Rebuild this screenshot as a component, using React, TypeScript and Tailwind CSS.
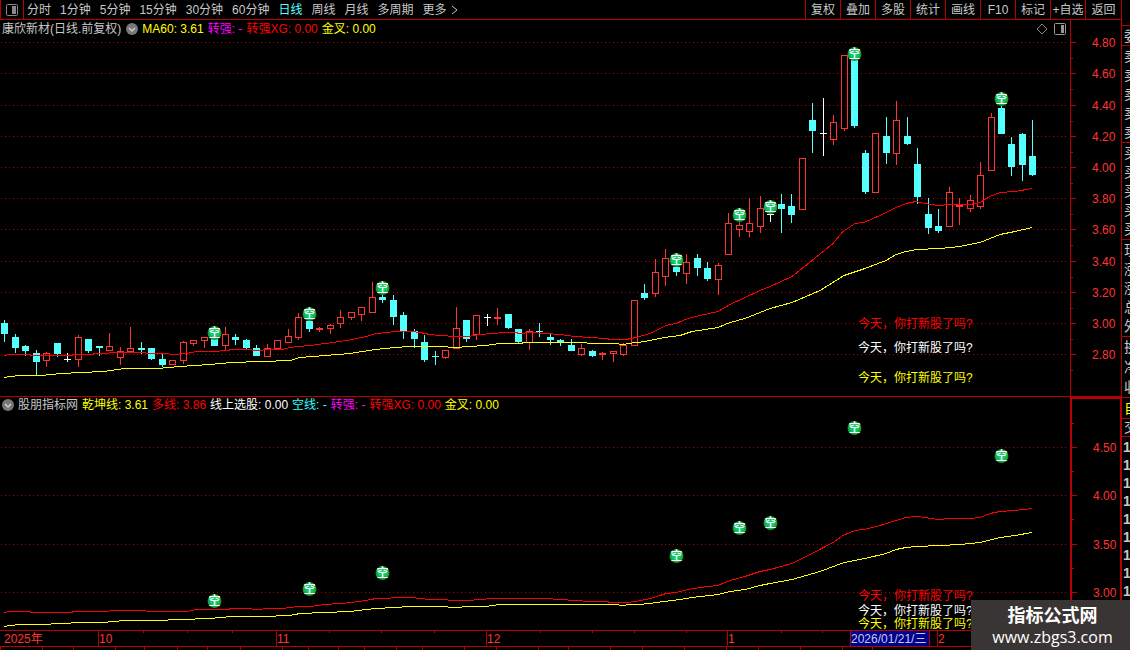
import { useState } from 'react'

type Kind = 'up' | 'down' | 'flat'
// center x, high, low, body top, body bottom, kind
type Candle = [number, number, number, number, number, Kind]

const FONT = "font-['Liberation_Sans','Noto_Sans_CJK_SC',sans-serif]"

const candles: Candle[] = [
  [4, 320, 342, 323, 334, 'down'], [15, 334, 353, 337, 348, 'down'], [25, 345, 356, 346, 351, 'down'],
  [36, 350, 375, 353, 362, 'down'], [46, 352, 367, 353, 361, 'up'], [57, 343, 357, 343, 354, 'down'],
  [67, 353, 362, 359, 360, 'flat'], [78, 335, 367, 337, 360, 'up'], [88, 339, 353, 339, 351, 'down'],
  [99, 346, 356, 346, 348, 'down'], [109, 333, 351, 346, 351, 'up'], [120, 347, 365, 351, 358, 'up'],
  [130, 327, 352, 348, 352, 'up'], [141, 342, 354, 348, 350, 'down'], [151, 348, 360, 348, 359, 'down'],
  [162, 353, 367, 359, 365, 'down'], [172, 360, 365, 360, 365, 'up'], [183, 341, 364, 342, 361, 'up'],
  [193, 340, 346, 340, 344, 'up'], [204, 337, 348, 337, 341, 'up'], [214, 339, 346, 339, 346, 'down'],
  [225, 327, 350, 334, 346, 'up'], [235, 334, 345, 337, 340, 'down'], [246, 339, 349, 340, 348, 'down'],
  [256, 345, 356, 348, 356, 'down'], [267, 344, 357, 348, 357, 'up'], [277, 340, 349, 340, 349, 'up'],
  [288, 329, 343, 336, 343, 'up'], [298, 313, 340, 317, 338, 'up'], [309, 321, 332, 321, 329, 'down'],
  [319, 327, 332, 328, 330, 'up'], [330, 324, 334, 325, 329, 'up'], [340, 310, 328, 317, 324, 'up'],
  [351, 312, 320, 312, 318, 'up'], [361, 307, 321, 307, 315, 'up'], [372, 282, 313, 297, 313, 'up'],
  [382, 295, 303, 297, 300, 'down'], [393, 295, 325, 300, 317, 'down'], [403, 312, 339, 315, 332, 'down'],
  [414, 329, 348, 331, 339, 'down'], [424, 335, 362, 342, 360, 'down'], [435, 351, 365, 356, 357, 'down'],
  [445, 350, 359, 350, 358, 'up'], [456, 307, 349, 328, 349, 'up'], [466, 320, 342, 320, 339, 'down'],
  [476, 315, 340, 315, 335, 'up'], [487, 314, 326, 317, 318, 'flat'], [497, 308, 325, 317, 319, 'up'],
  [508, 314, 329, 314, 328, 'down'], [518, 329, 343, 329, 342, 'down'], [529, 329, 350, 331, 343, 'up'],
  [539, 323, 337, 331, 332, 'down'], [550, 334, 345, 337, 340, 'down'], [560, 339, 346, 340, 343, 'down'],
  [571, 339, 351, 345, 351, 'down'], [581, 344, 356, 348, 355, 'up'], [592, 350, 357, 351, 356, 'down'],
  [602, 352, 360, 353, 355, 'up'], [613, 351, 362, 351, 354, 'up'], [623, 343, 356, 345, 355, 'up'],
  [634, 300, 346, 300, 346, 'up'], [644, 284, 300, 293, 298, 'down'], [655, 259, 297, 272, 294, 'up'],
  [665, 249, 286, 258, 277, 'up'], [676, 266, 276, 267, 272, 'down'], [686, 254, 284, 262, 274, 'up'],
  [697, 254, 276, 258, 268, 'down'], [707, 262, 281, 268, 279, 'down'], [718, 263, 295, 265, 280, 'up'],
  [728, 213, 255, 223, 255, 'up'], [739, 221, 237, 225, 230, 'up'], [749, 198, 237, 223, 232, 'up'],
  [760, 196, 233, 208, 227, 'up'], [770, 212, 222, 214, 215, 'flat'], [781, 194, 233, 204, 209, 'down'],
  [791, 194, 223, 206, 215, 'down'], [802, 158, 210, 158, 210, 'up'], [812, 103, 153, 120, 131, 'down'],
  [823, 98, 156, 133, 134, 'flat'], [833, 115, 145, 122, 140, 'up'], [844, 55, 131, 55, 129, 'up'],
  [854, 60, 128, 60, 126, 'down'], [865, 150, 194, 153, 192, 'down'], [875, 133, 193, 133, 193, 'up'],
  [886, 117, 164, 136, 153, 'down'], [896, 101, 165, 120, 154, 'up'], [907, 117, 145, 136, 144, 'down'],
  [917, 148, 204, 164, 197, 'down'], [928, 198, 234, 214, 228, 'down'], [938, 209, 233, 226, 231, 'down'],
  [949, 187, 227, 192, 227, 'up'], [959, 198, 225, 205, 207, 'up'], [970, 195, 212, 200, 209, 'up'],
  [980, 162, 209, 175, 207, 'up'], [991, 113, 171, 117, 171, 'up'], [1001, 106, 134, 108, 134, 'down'],
  [1011, 137, 176, 144, 167, 'down'], [1022, 133, 181, 134, 165, 'down'], [1032, 120, 176, 156, 175, 'down'],
]

const fastLine: [number, number][] = [
  [4, 355], [10, 354], [30, 354], [31, 355], [72, 355], [73, 354], [93, 354], [94, 353], [124, 352], [145, 352],
  [147, 353], [168, 353], [170, 354], [178, 354], [180, 353], [188, 353], [190, 352], [199, 351], [219, 351],
  [221, 350], [229, 350], [230, 349], [251, 349], [253, 350], [262, 350], [264, 349], [282, 349], [290, 347],
  [298, 346], [310, 345], [325, 343], [340, 341], [352, 339], [366, 336], [376, 333], [388, 332], [395, 331],
  [412, 331], [420, 332], [430, 334], [440, 335], [455, 336], [468, 336], [480, 334], [492, 333], [505, 332],
  [515, 332], [520, 333], [530, 332], [545, 333], [560, 334], [575, 336], [590, 337], [605, 338], [612, 339],
  [626, 339], [636, 337], [650, 333], [660, 328], [666, 325], [676, 323], [688, 318], [700, 315], [718, 311],
  [730, 304], [745, 297], [760, 290], [770, 286], [792, 276], [812, 260], [833, 243], [843, 231], [855, 223],
  [864, 222], [880, 215], [896, 207], [906, 203], [916, 201], [925, 203], [938, 205], [950, 204], [970, 204],
  [980, 202], [990, 196], [1000, 192], [1015, 191], [1032, 188],
]

const slowLine: [number, number][] = [
  [4, 377], [10, 376], [20, 375], [41, 375], [61, 373], [82, 372], [103, 371], [125, 368], [157, 368], [180, 366],
  [210, 364], [231, 362], [262, 361], [290, 360], [300, 357], [325, 355], [350, 353], [375, 349], [395, 347],
  [410, 346], [440, 346], [455, 347], [470, 346], [485, 345], [500, 343], [522, 343], [523, 342], [586, 342],
  [588, 343], [618, 343], [620, 344], [625, 344], [627, 343], [638, 342], [650, 340], [664, 337], [680, 335],
  [692, 331], [718, 327], [730, 322], [745, 318], [760, 312], [770, 308], [792, 302], [820, 290], [844, 275],
  [865, 268], [886, 260], [896, 254], [906, 251], [917, 249], [940, 248], [960, 246], [980, 242], [1000, 234],
  [1015, 231], [1032, 227],
]

const mainMarks = [[214, 333], [309, 314], [382, 288], [676, 260], [739, 215], [770, 207], [854, 54], [1001, 99]]
const subMarks = [[214, 601], [309, 589], [382, 573], [676, 556], [739, 528], [770, 523], [854, 428], [1001, 456]]

const mainScale: [string, number][] = [
  ['4.80', 42], ['4.60', 73], ['4.40', 105], ['4.20', 136], ['4.00', 167], ['3.80', 198],
  ['3.60', 229], ['3.40', 261], ['3.20', 292], ['3.00', 323], ['2.80', 354],
]
const subScale: [string, number][] = [['4.50', 447], ['4.00', 495], ['3.50', 544], ['3.00', 592]]

const periods = ['分时', '1分钟', '5分钟', '15分钟', '30分钟', '60分钟', '日线', '周线', '月线', '多周期', '更多']
const tools = ['复权', '叠加', '多股', '统计', '画线', 'F10', '标记', '+自选', '返回']

const mainLegend = [
  { text: 'MA60: 3.61', color: 'text-[#ffff00]' },
  { text: '转强: -', color: 'text-[#ff00ff]' },
  { text: '转强XG: 0.00', color: 'text-[#ff0000]' },
  { text: '金叉: 0.00', color: 'text-[#ffff00]' },
]
const subLegend = [
  { text: '乾坤线: 3.61', color: 'text-[#ffff00]' },
  { text: '多线: 3.86', color: 'text-[#ff0000]' },
  { text: '线上选股: 0.00', color: 'text-white' },
  { text: '空线: -', color: 'text-[#33ffff]' },
  { text: '转强: -', color: 'text-[#ff00ff]' },
  { text: '转强XG: 0.00', color: 'text-[#ff0000]' },
  { text: '金叉: 0.00', color: 'text-[#ffff00]' },
]

const notice = '今天，你打新股了吗?'

const quoteGroups = [
  { rows: ['委'], line: 'h-5' },
  { rows: ['卖', '卖', '卖', '卖', '卖'], line: 'h-[97px]' },
  { rows: ['买', '买', '买', '买', '买'], line: 'h-[97px]' },
  { rows: ['现', '涨', '涨', '总', '外'], line: 'h-[97px]' },
  { rows: ['换', '净', '收'], line: 'h-[61px]' },
]

const bottomTabs = [42, 31, 42, 29, 33, 30, 33, 42, 26, 30, 26, 32, 26, 42, 32, 42, 30, 42, 32, 42, 42, 32, 42, 42, 30, 42]

function Candlestick({ data }: { data: Candle }) {
  const [x, high, low, top, bottom, kind] = data
  if (kind === 'up') {
    return (
      <g fill="#ff3333">
        <rect x={x} y={high} width={1} height={top - high} />
        <rect x={x} y={bottom} width={1} height={low - bottom} />
        <path fillRule="evenodd" d={`M${x - 3} ${top}h7v${bottom - top}h-7z M${x - 2} ${top + 1}v${Math.max(bottom - top - 2, 0)}h5v${-Math.max(bottom - top - 2, 0)}z`} />
      </g>
    )
  }
  return (
    <g fill={kind === 'flat' ? '#ffffff' : '#54ffff'}>
      <rect x={x} y={high} width={1} height={low - high} />
      <rect x={x - 3} y={top} width={7} height={bottom - top} />
    </g>
  )
}

function Mark({ x, y }: { x: number; y: number }) {
  return (
    <g>
      <circle cx={x + 0.5} cy={y} r={7} fill="url(#mark)" />
      <text x={x + 0.5} y={y + 4} textAnchor="middle" fill="#fff" fontSize={12} fontWeight={500}>空</text>
    </g>
  )
}

function MarkFill() {
  return (
    <defs>
      <radialGradient id="mark">
        <stop offset="0" stopColor="#14d88a" />
        <stop offset="0.65" stopColor="#10c060" />
        <stop offset="1" stopColor="#1a8a14" />
      </radialGradient>
    </defs>
  )
}

function GridLines({ scale }: { scale: [string, number][] }) {
  return (
    <>
      {scale.map(([label, y]) => (
        <line key={label} x1={1} x2={1068} y1={y + 0.5} y2={y + 0.5} stroke="#b00000" strokeDasharray="1 3" shapeRendering="crispEdges" />
      ))}
    </>
  )
}

function Line({ points, color, map }: { points: [number, number][]; color: string; map?: (y: number) => number }) {
  const list = points.map(([x, y]) => `${x},${(map ? map(y) : y) + 0.5}`).join(' ')
  return <polyline points={list} fill="none" stroke={color} strokeWidth={1} shapeRendering="crispEdges" />
}

function PriceAxis({ scale, offset, minor, start }: { scale: [string, number][]; offset: number; minor: number; start: number }) {
  return (
    <svg className="block h-full w-full" aria-label="价格坐标">
      <g transform={`translate(0 ${-offset})`}>
        {scale.map(([label, y]) => (
          <g key={label}>
            <rect x={0} y={y} width={5} height={1} fill="#c00000" />
            <rect x={0} y={y + minor} width={2} height={1} fill="#c00000" />
            <text x={21} y={y + 5} fontSize={12} fill="#ff3333">{label}</text>
          </g>
        ))}
        <rect x={0} y={start} width={2} height={1} fill="#c00000" />
      </g>
    </svg>
  )
}

function Toggle({ label }: { label: string }) {
  return (
    <button aria-label={label} className="shrink-0">
      <svg width="12" height="12" viewBox="0 0 12 12" className="block">
        <circle cx="6" cy="6" r="6" fill="#777" />
        <path d="M3 5l3 3 3-3" fill="none" stroke="#ccc" strokeWidth="1.5" />
      </svg>
    </button>
  )
}

function Legend({ items }: { items: { text: string; color: string }[] }) {
  return (
    <>
      {items.map((item) => (
        <span key={item.text} className={item.color}>{item.text}</span>
      ))}
    </>
  )
}

function Toolbar({ active, onChange }: { active: string; onChange: (p: string) => void }) {
  return (
    <header className="flex h-5 shrink-0 border-b border-[#b80000] text-[#c8c8c8]">
      <button aria-label="侧栏" className="flex w-6 shrink-0 items-center justify-center border-x border-[#b80000]">
        <svg width="12" height="12" viewBox="0 0 12 12">
          <rect x="0.5" y="0.5" width="11" height="11" rx="1" fill="none" stroke="#888" />
          <rect x="6" y="2" width="4" height="8" fill="#888" />
        </svg>
      </button>
      <nav className="ml-[3px] flex items-center gap-[9px]">
        {periods.map((p) => (
          <button key={p} onClick={() => onChange(p)} className={p === active ? 'text-[#54ffff]' : ''}>
            {p}
          </button>
        ))}
      </nav>
      <svg width="8" height="12" viewBox="0 0 8 12" className="ml-1 self-center">
        <path d="M1 2l5 4-5 4" fill="none" stroke="#c8c8c8" />
      </svg>
      <div className="ml-auto flex">
        {tools.map((t) => (
          <button key={t} className="w-[35px] border-l border-[#b80000] text-center last:w-9">
            {t}
          </button>
        ))}
      </div>
    </header>
  )
}

function QuoteStrip() {
  return (
    <aside className="flex w-[9px] shrink-0 flex-col overflow-hidden border-l border-[#b80000] pt-[25px] text-[14px] text-[#c8c8c8]">
      {quoteGroups.map((g, i) => (
        <div key={i} className={`flex shrink-0 flex-col justify-around border-t border-[#b80000] pl-0.5 leading-4 ${g.line}`}>
          {g.rows.map((r, j) => <span key={j} className="w-4">{r}</span>)}
        </div>
      ))}
      <div className="h-[21px] shrink-0 border-t border-[#b80000] pl-0.5 leading-5 text-[#ffff00]"><span className="block w-4">自</span></div>
      <div className="h-[19px] shrink-0 border-y border-[#b80000] pl-0.5 leading-4"><span className="block w-4">交</span></div>
      <div className="flex flex-col pt-px pl-px font-bold leading-[18px]">
        {Array.from({ length: 9 }, (_, i) => <span key={i}>1</span>)}
      </div>
    </aside>
  )
}

export default function App() {
  const [period, setPeriod] = useState('日线')
  const toSub = (y: number) => Math.round(592 + (y - 323) * 0.622)

  return (
    <div className={`relative flex h-screen overflow-hidden bg-black text-xs whitespace-nowrap ${FONT}`}>
      <main className="flex min-w-0 flex-1 flex-col">
        <Toolbar active={period} onChange={setPeriod} />

        {/* 主图 */}
        <section className="flex h-[377px] shrink-0 border-b border-[#b80000]">
          <div className="relative min-w-0 flex-1">
            <svg className="block h-full w-full" aria-label="K线图">
              <MarkFill />
              <g transform="translate(0 -20)">
                <GridLines scale={mainScale} />
                <g shapeRendering="crispEdges">
                  {candles.map((c) => <Candlestick key={c[0]} data={c} />)}
                </g>
                <Line points={fastLine} color="#ff0000" />
                <Line points={slowLine} color="#ffff00" />
                {mainMarks.map(([x, y]) => <Mark key={x} x={x} y={y} />)}
                <g fontSize={12}>
                  <text x={858} y={328} fill="#ff0000">{notice}</text>
                  <text x={858} y={352} fill="#ffffff">{notice}</text>
                  <text x={858} y={382} fill="#ffff00">{notice}</text>
                </g>
              </g>
            </svg>
            <div className="absolute inset-x-0 top-0 flex h-[18px] items-center justify-between pr-1 pl-0.5">
              <div className="flex items-center gap-1">
                <span className="mr-px text-[#c8c8c8]">康欣新材(日线.前复权)</span>
                <Toggle label="主图指标" />
                <Legend items={mainLegend} />
              </div>
              <div className="flex items-center gap-1.5">
                <svg width="12" height="12" viewBox="0 0 12 12" fill="none" stroke="#888">
                  <path d="M6 1l5 5-5 5-5-5z" />
                </svg>
                <svg width="12" height="12" viewBox="0 0 12 12">
                  <rect x="0.5" y="0.5" width="11" height="11" rx="1" fill="none" stroke="#999" />
                  <rect x="7" y="2" width="3" height="8" fill="#999" />
                </svg>
              </div>
            </div>
          </div>
          <div className="w-[51px] border-l border-[#b80000]">
            <PriceAxis scale={mainScale} offset={20} minor={16} start={58} />
          </div>
        </section>

        {/* 副图 */}
        <section className="flex h-[233px] shrink-0">
          <div className="relative min-w-0 flex-1">
            <svg className="block h-full w-full" aria-label="指标图">
              <g transform="translate(0 -397)">
                <GridLines scale={subScale} />
                <Line points={fastLine} color="#ff0000" map={toSub} />
                <Line points={slowLine} color="#ffff00" map={toSub} />
                {subMarks.map(([x, y]) => <Mark key={x} x={x} y={y} />)}
                <g fontSize={12}>
                  <text x={858} y={600} fill="#ff0000">{notice}</text>
                  <text x={858} y={615} fill="#ffffff">{notice}</text>
                  <text x={858} y={628} fill="#ffff00">{notice}</text>
                </g>
              </g>
            </svg>
            <div className="absolute inset-x-0 top-0 flex h-4 items-center gap-1 px-0.5">
              <Toggle label="副图指标" />
              <span className="text-[#c8c8c8]">股朋指标网</span>
              <Legend items={subLegend} />
            </div>
          </div>
          <div className="w-[51px] border-t-2 border-r border-l-2 border-[#b80000]">
            <PriceAxis scale={subScale} offset={399} minor={24} start={423} />
          </div>
        </section>

        {/* 时间轴 */}
        <div className="h-[17px] shrink-0 border-y border-[#b80000]">
          <svg className="block h-full w-full" aria-label="时间轴" fontSize={12}>
            <g fill="#b80000">
              {[98, 276, 486, 727, 850, 929, 937].map((x) => <rect key={x} x={x} y={0} width={1} height={15} />)}
              {[143, 187, 232, 329, 381, 434, 540, 592, 634, 686, 781, 822, 989, 1040].map((x) => (
                <rect key={x} x={x} y={0} width={1} height={2} />
              ))}
            </g>
            <rect x={851} y={0} width={78} height={15} fill="#000090" />
            <g fill="#ff3333">
              <text x={4} y={12}>2025年</text>
              <text x={99} y={12}>10</text>
              <text x={277} y={12}>11</text>
              <text x={487} y={12}>12</text>
              <text x={728} y={12}>1</text>
              <text x={938} y={12}>2</text>
            </g>
            <text x={851} y={12} fill="#c8c8e0">2026/01/21/三</text>
          </svg>
        </div>

        <div className="flex min-h-0 flex-1 overflow-hidden">
          {bottomTabs.map((w, i) => (
            <div key={i} className="shrink-0 border-l border-[#b80000]" style={{ width: w }} />
          ))}
        </div>
      </main>

      <QuoteStrip />

      <div className="absolute right-0 bottom-0 flex h-[50px] w-[159px] flex-col items-center justify-center bg-[#3a3535] pl-1 text-white">
        <strong className="text-lg leading-6">指标公式网</strong>
        <a href="#" className="font-['Open_Sans',sans-serif] text-base leading-[18px]">www.zbgs3.com</a>
      </div>
    </div>
  )
}
